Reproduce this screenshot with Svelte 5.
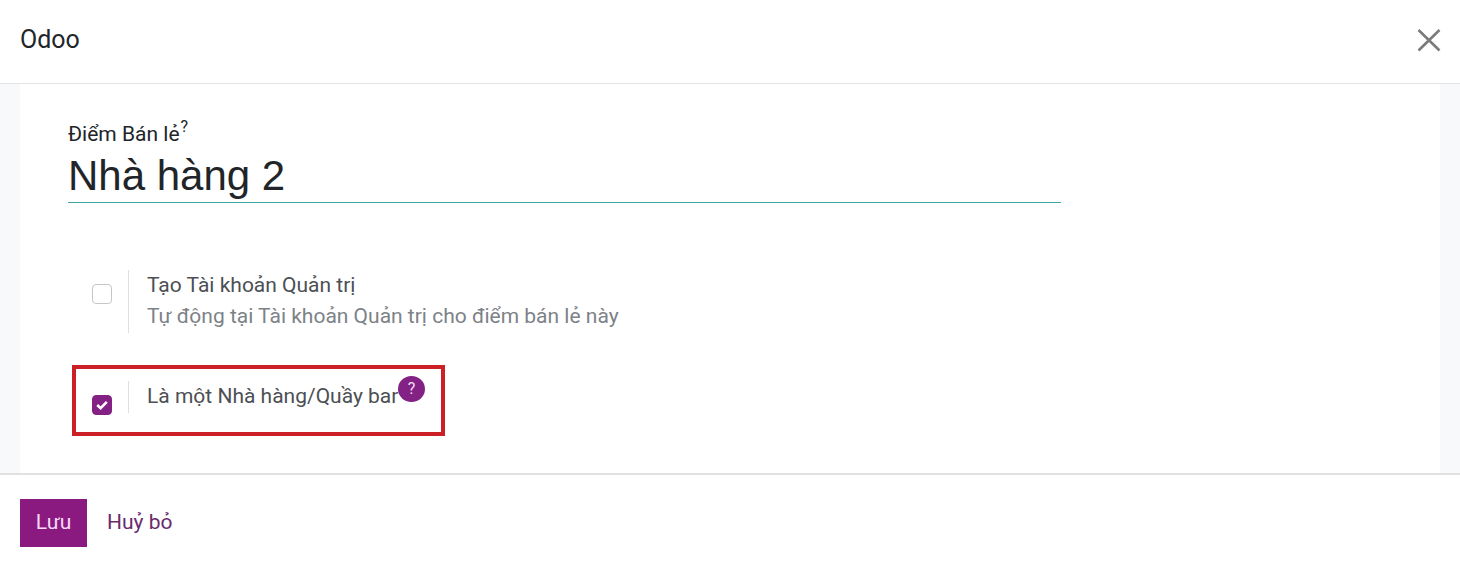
<script>
  const rowA = { title: 'Tạo Tài khoản Quản trị', desc: 'Tự động tại Tài khoản Quản trị cho điểm bán lẻ này' };
</script>

<div class="dialog">
  <header class="head">
    <div class="brand">Odoo</div>
    <svg class="close" width="26" height="26" viewBox="0 0 26 26" aria-label="Đóng">
      <path d="M2.5 3 L23.5 23.5 M23.5 3 L2.5 23.5" stroke="#7b7b7b" stroke-width="2.6" fill="none" />
    </svg>
  </header>

  <main class="body">
    <div class="sheet">
      <label class="name-label" for="n">Điểm Bán lẻ<sup>?</sup></label>
      <div class="name-input" id="n">Nhà hàng 2</div>

      <div class="setting first">
        <div class="check-col"><span class="box"></span></div>
        <div class="text-col">
          <div class="title">{rowA.title}</div>
          <div class="desc">{rowA.desc}</div>
        </div>
      </div>

      <div class="setting second">
        <div class="check-col"><span class="box on">
          <svg width="12" height="10" viewBox="0 0 12 10"><path d="M1.2 5 L4.6 8.2 L10.8 1.8" stroke="#fff" stroke-width="2.6" fill="none" /></svg>
        </span></div>
        <div class="text-col">
          <div class="title">Là một Nhà hàng/Quầy bar<span class="help">?</span></div>
        </div>
        <span class="mark"></span>
      </div>
    </div>
  </main>

  <footer class="foot">
    <button class="save">Lưu</button>
    <button class="cancel">Huỷ bỏ</button>
  </footer>
</div>

<style>
  :global(body) { margin: 0; background: #fff; }
  .dialog {
    width: 1460px;
    height: 565px;
    display: flex;
    flex-direction: column;
    font-family: Roboto, "Noto Sans", sans-serif;
    color: #4c4c4c;
    overflow: hidden;
  }
  .head {
    height: 83px;
    flex: none;
    box-sizing: content-box;
    border-bottom: 1px solid #e2e4e6;
    display: flex;
    align-items: center;
    justify-content: space-between;
    padding: 0 18px 0 20px;
  }
  .brand { font-size: 25px; color: #212529; margin-top: -5px; }
  .close { display: block; margin-top: -3px; }
  .body {
    height: 389px;
    flex: none;
    background: #f8f9fa;
    padding: 0 20px;
  }
  .sheet {
    background: #fff;
    height: 100%;
    padding: 36px 48px 0;
    box-sizing: border-box;
  }
  .name-label {
    display: block;
    font-size: 21px;
    line-height: 28px;
    color: #212529;
  }
  .name-label sup {
    font-size: 16px;
    line-height: 0;
    margin-left: 1px;
    position: relative;
    top: -1px;
    vertical-align: super;
  }
  .name-input {
    width: 993px;
    height: 55px;
    box-sizing: border-box;
    border-bottom: 1px solid #3fa7ab;
    font-family: "Liberation Sans", Arial, sans-serif;
    font-size: 42px;
    line-height: 56px;
    color: #212529;
  }
  .setting {
    position: relative;
    display: flex;
  }
  .first { margin-top: 67px; height: 63px; }
  .second { margin-top: 48px; height: 32px; }
  .check-col {
    width: 61px;
    flex: none;
    box-sizing: border-box;
    padding-left: 24px;
    display: flex;
    align-items: center;
    border-right: 1px solid #dee0e2;
  }
  .first .check-col { padding-bottom: 15px; }
  .second .check-col { align-items: flex-end; height: 32px; }
  .box {
    width: 20px;
    height: 20px;
    box-sizing: border-box;
    border: 1px solid #c4c7ca;
    border-radius: 4px;
    background: #fff;
    display: flex;
    align-items: center;
    justify-content: center;
  }
  .box.on {
    background: #842185;
    border-color: #842185;
    margin-bottom: -2px;
  }
  .box svg { display: block; }
  .text-col { padding-left: 18px; font-size: 21px; }
  .title { line-height: 30px; color: #4c4f54; position: relative; white-space: nowrap; }
  .desc { line-height: 30px; color: #7d8287; margin-top: 1px; }
  .help {
    position: absolute;
    left: 251px;
    top: -5px;
    width: 27px;
    height: 26px;
    border-radius: 50%;
    background: #842185;
    color: #f3dff3;
    font-size: 16px;
    line-height: 26px;
    text-align: center;
  }
  .mark {
    position: absolute;
    left: 4px;
    top: -16px;
    width: 373px;
    height: 71px;
    box-sizing: border-box;
    border: 4px solid #cc2027;
    pointer-events: none;
  }
  .foot {
    flex: 1;
    border-top: 2px solid #dfe1e3;
    padding: 24px 20px 0;
    display: flex;
    align-items: flex-start;
  }
  .foot button {
    font: inherit;
    font-size: 21px;
    border: 0;
    height: 48px;
    background: none;
    padding: 0 0 2px;
  }
  .foot .save {
    width: 67px;
    background: #8a1a80;
    color: #f7d9f7;
  }
  .cancel { color: #6a2a6c; margin-left: 20px; }
</style>
